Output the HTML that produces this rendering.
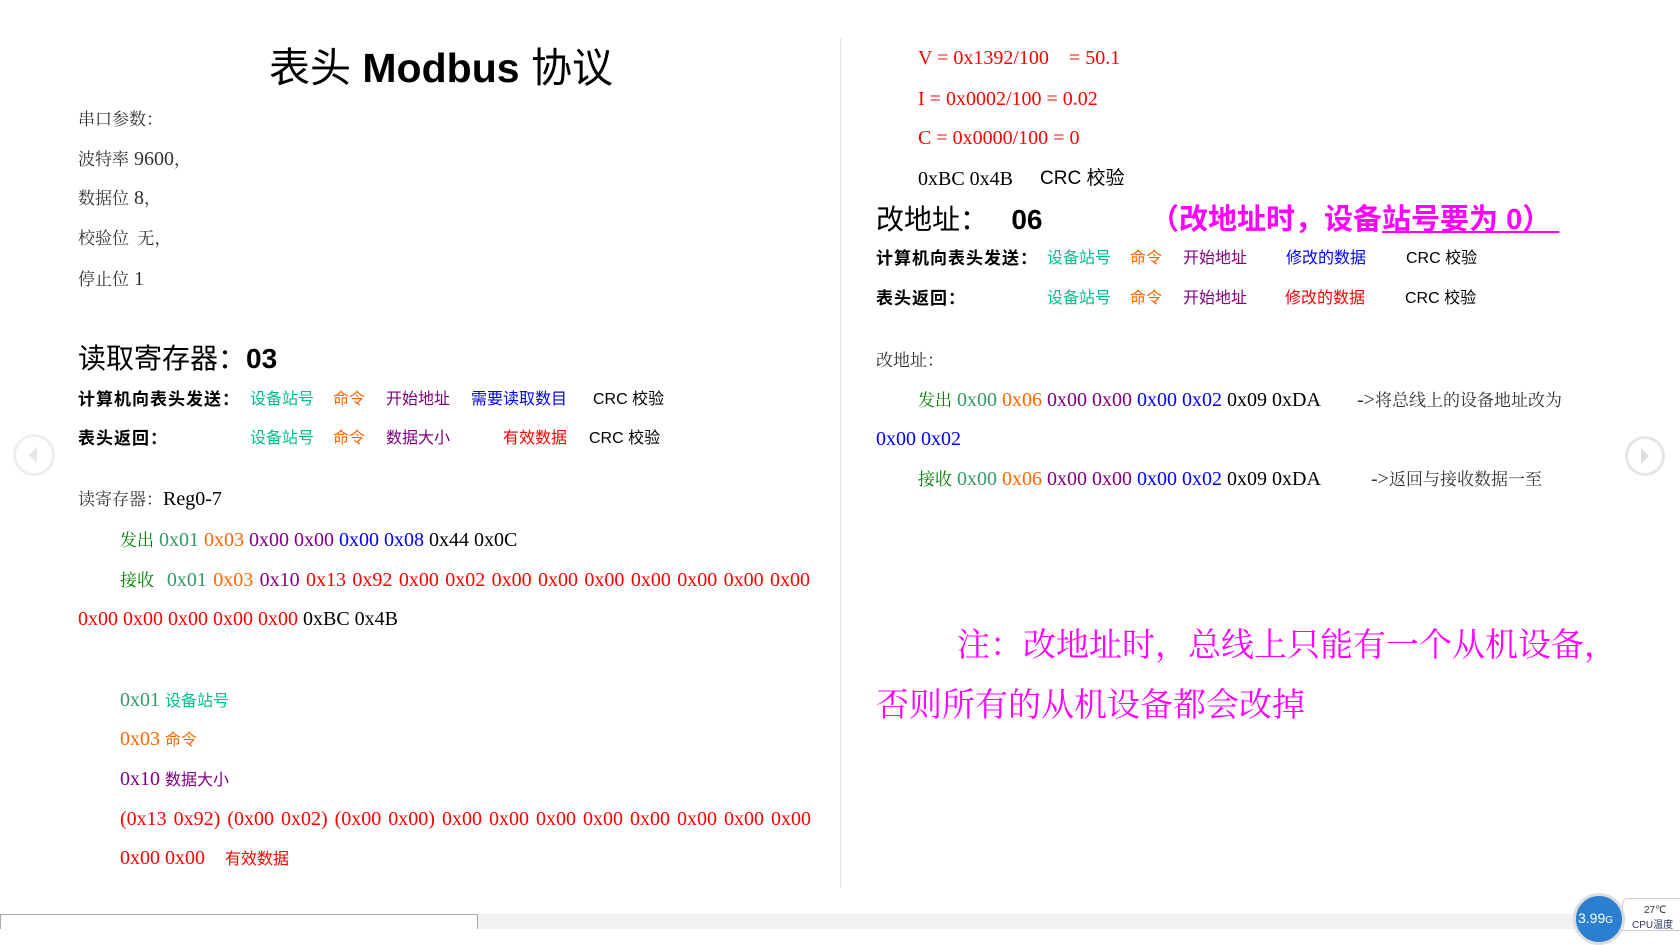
<!DOCTYPE html>
<html><head><meta charset="utf-8"><style>
body{margin:0;width:1680px;height:929px;background:#fff;position:relative;overflow:hidden;font-family:"Liberation Serif","Noto Serif CJK SC",serif;color:#000}
.a{position:absolute;white-space:nowrap;line-height:1}
.t{font-size:20px}
.c{font-size:17px}
.s{font-family:"Liberation Sans","Noto Sans CJK SC",sans-serif;font-size:16px}
.b{font-weight:bold;font-size:17px;letter-spacing:1px}
.g{color:#008000}.sg{color:#339966}.tl{color:#00bf8f}.o{color:#ff6600}.p{color:#800080}.bl{color:#0000ff}.r{color:#ff0000}.m{color:#ff00ff}.gy{color:#333}
.h{font-family:"Liberation Sans","Noto Sans CJK SC",sans-serif;font-size:28px}
.ws{word-spacing:1.4px}
</style></head><body>
<div class="a" style="left:840px;top:38px;width:1px;height:850px;background:#e4e4e4"></div>

<div class="a" style="left:269px;top:48px;font-family:'Liberation Sans','Noto Sans CJK SC',sans-serif;font-size:41px">表头 <b>Modbus</b> 协议</div>
<div class="a t gy" style="left:78px;top:109px"><span class="c">串口参数：</span></div>
<div class="a t gy" style="left:78px;top:149px"><span class="c">波特率</span> 9600<span class="c">，</span></div>
<div class="a t gy" style="left:78px;top:188px"><span class="c">数据位</span> 8<span class="c">，</span></div>
<div class="a t gy" style="left:78px;top:228px"><span class="c">校验位&nbsp; 无，</span></div>
<div class="a t gy" style="left:78px;top:269px"><span class="c">停止位</span> 1</div>

<div class="a h" style="left:78px;top:345px">读取寄存器：<b>03</b></div>
<div class="a s b" style="left:78px;top:391px">计算机向表头发送：</div>
<div class="a s tl" style="left:250px;top:392px">设备站号</div>
<div class="a s o" style="left:333px;top:392px">命令</div>
<div class="a s p" style="left:386px;top:392px">开始地址</div>
<div class="a s bl" style="left:471px;top:392px">需要读取数目</div>
<div class="a s" style="left:593px;top:392px">CRC 校验</div>
<div class="a s b" style="left:78px;top:430px">表头返回：</div>
<div class="a s tl" style="left:250px;top:431px">设备站号</div>
<div class="a s o" style="left:333px;top:431px">命令</div>
<div class="a s p" style="left:386px;top:431px">数据大小</div>
<div class="a s r" style="left:503px;top:431px">有效数据</div>
<div class="a s" style="left:589px;top:431px">CRC 校验</div>

<div class="a t" style="left:78px;top:489px"><span class="gy c">读寄存器：</span>Reg0-7</div>
<div class="a t" style="left:120px;top:530px"><span class="g c">发出</span> <span class="sg">0x01</span> <span class="o">0x03</span> <span class="p">0x00 0x00</span> <span class="bl">0x00 0x08</span> 0x44 0x0C</div>
<div class="a t ws" style="left:120px;top:570px"><span class="g c">接收</span> &nbsp;<span class="sg">0x01</span> <span class="o">0x03</span> <span class="p">0x10</span> <span class="r">0x13 0x92 0x00 0x02 0x00 0x00 0x00 0x00 0x00 0x00 0x00</span></div>
<div class="a t" style="left:78px;top:609px"><span class="r">0x00 0x00 0x00 0x00 0x00</span> 0xBC 0x4B</div>
<div class="a t" style="left:120px;top:690px"><span class="sg">0x01</span> <span class="s tl">设备站号</span></div>
<div class="a t" style="left:120px;top:729px"><span class="o">0x03 <span class="s">命令</span></span></div>
<div class="a t" style="left:120px;top:769px"><span class="p">0x10 <span class="s">数据大小</span></span></div>
<div class="a t r ws" style="left:120px;top:809px;word-spacing:2px">(0x13 0x92) (0x00 0x02) (0x00 0x00) 0x00 0x00 0x00 0x00 0x00 0x00 0x00 0x00</div>
<div class="a t r" style="left:120px;top:848px">0x00 0x00 &nbsp;&nbsp;&nbsp;<span class="s">有效数据</span></div>

<div class="a t r" style="left:918px;top:48px">V = 0x1392/100 &nbsp;&nbsp;&nbsp;= 50.1</div>
<div class="a t r" style="left:918px;top:89px">I = 0x0002/100 = 0.02</div>
<div class="a t r" style="left:918px;top:128px">C = 0x0000/100 = 0</div>
<div class="a t" style="left:918px;top:169px">0xBC 0x4B</div>
<div class="a s" style="left:1040px;top:169px;font-size:19px">CRC 校验</div>
<div class="a h" style="left:876px;top:206px">改地址： &nbsp;&nbsp;<b>06</b></div>
<div class="a m" style="left:1150px;top:206px;font-weight:bold;font-family:'Liberation Sans','Noto Sans CJK SC',sans-serif;font-size:29px">（改地址时，设备<span style="text-decoration:underline">站号要为 0）&nbsp;</span></div>
<div class="a s b" style="left:876px;top:250px">计算机向表头发送：</div>
<div class="a s tl" style="left:1047px;top:251px">设备站号</div>
<div class="a s o" style="left:1130px;top:251px">命令</div>
<div class="a s p" style="left:1183px;top:251px">开始地址</div>
<div class="a s bl" style="left:1286px;top:251px">修改的数据</div>
<div class="a s" style="left:1406px;top:251px">CRC 校验</div>
<div class="a s b" style="left:876px;top:290px">表头返回：</div>
<div class="a s tl" style="left:1047px;top:291px">设备站号</div>
<div class="a s o" style="left:1130px;top:291px">命令</div>
<div class="a s p" style="left:1183px;top:291px">开始地址</div>
<div class="a s r" style="left:1285px;top:291px">修改的数据</div>
<div class="a s" style="left:1405px;top:291px">CRC 校验</div>

<div class="a t gy" style="left:876px;top:350px"><span class="c">改地址：</span></div>
<div class="a t" style="left:918px;top:390px"><span class="g c">发出</span> <span class="sg">0x00</span> <span class="o">0x06</span> <span class="p">0x00 0x00</span> <span class="bl">0x00 0x02</span> 0x09 0xDA</div>
<div class="a t gy" style="left:1357px;top:390px">-&gt;<span class="c">将总线上的设备地址改为</span></div>
<div class="a t bl" style="left:876px;top:429px">0x00 0x02</div>
<div class="a t" style="left:918px;top:469px"><span class="g c">接收</span> <span class="sg">0x00</span> <span class="o">0x06</span> <span class="p">0x00 0x00</span> <span class="bl">0x00 0x02</span> 0x09 0xDA</div>
<div class="a t gy" style="left:1371px;top:469px">-&gt;<span class="c">返回与接收数据一至</span></div>

<div class="a m" style="left:957px;top:630px;font-size:33px">注：改地址时，总线上只能有一个从机设备，</div>
<div class="a m" style="left:876px;top:690px;font-size:33px">否则所有的从机设备都会改掉</div>

<div class="a" style="left:13px;top:434px;width:42px;height:42px;border:3px solid #eee;border-radius:50%;box-sizing:border-box"></div>
<div class="a" style="left:29px;top:447px;width:0;height:0;border-top:8px solid transparent;border-bottom:8px solid transparent;border-right:8px solid #e6e6e6"></div>
<div class="a" style="left:1625px;top:436px;width:40px;height:40px;border:3px solid #e6e6e6;border-radius:50%;box-sizing:border-box"></div>
<div class="a" style="left:1641px;top:448px;width:0;height:0;border-top:8px solid transparent;border-bottom:8px solid transparent;border-left:8px solid #ddd"></div>

<div class="a" style="left:0;top:914px;width:1680px;height:15px;background:#f2f2f2"></div>
<div class="a" style="left:0;top:914px;width:478px;height:15px;background:#fff;border:1px solid #aaa;border-bottom:none;box-sizing:border-box"></div>
<div class="a" style="left:1622px;top:898px;width:60px;height:31px;background:#fff;border:1px solid #ccc;border-radius:6px 0 0 0"></div>
<div class="a" style="left:1644px;top:906px;font-family:'Liberation Sans',sans-serif;font-size:10px;color:#333">27℃</div>
<div class="a" style="left:1632px;top:921px;font-family:'Liberation Sans','Noto Sans CJK SC',sans-serif;font-size:10px;color:#336">CPU温度</div>
<div class="a" style="left:1573px;top:893px;width:52px;height:52px;border-radius:50%;background:#2a7fd0;border:3px solid #ddd;box-sizing:border-box"></div>
<div class="a" style="left:1578px;top:911px;font-family:'Liberation Sans',sans-serif;font-size:14px;color:#fff">3.99<span style="font-size:10px">G</span></div>
</body></html>
